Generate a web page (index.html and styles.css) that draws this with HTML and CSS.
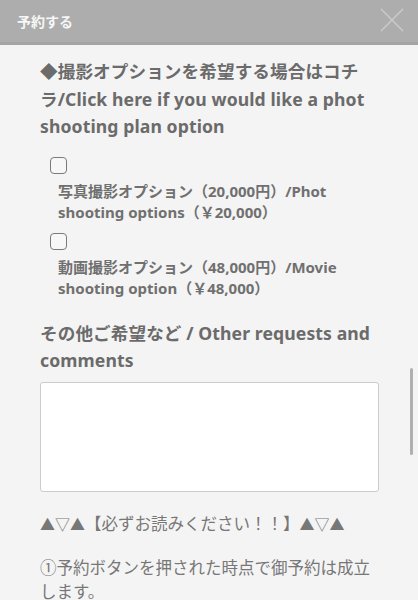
FILE: index.html
```html
<!DOCTYPE html>
<html lang="ja">
<head>
    <meta charset="UTF-8">
    <meta name="viewport" content="width=device-width, initial-scale=1.0">
    <title>予約する</title>
    <link rel="stylesheet" href="styles.css">
</head>
<body>
    <!-- Modal header -->
    <header class="modal-header">
        <span class="modal-title">予約する</span>
        <button class="modal-close" type="button" aria-label="close">
            <svg width="24" height="24" viewBox="0 0 24 24">
                <path d="M1 1 L23 23 M23 1 L1 23" stroke="#c9c9c9" stroke-width="1.6" fill="none"/>
            </svg>
        </button>
    </header>

    <main class="modal-body">
        <h2 class="field-title">◆撮影オプションを希望する場合はコチラ/Click here if you would like a phot shooting plan option</h2>

        <div class="option">
            <input type="checkbox" id="opt1" class="check">
            <label for="opt1" class="option-label">写真撮影オプション（20,000円）/Phot shooting options（￥20,000）</label>
        </div>
        <div class="option">
            <input type="checkbox" id="opt2" class="check">
            <label for="opt2" class="option-label">動画撮影オプション（48,000円）/Movie shooting option（￥48,000）</label>
        </div>

        <h2 class="field-title second">その他ご希望など / Other requests and comments</h2>
        <textarea class="comments"></textarea>

        <p class="notice-title"><span class="tri">▲▽▲</span>【必ずお読みください！！】<span class="tri">▲▽▲</span></p>
        <p class="notice">①予約ボタンを押された時点で御予約は成立します。</p>
    </main>

    <div class="scrollbar"></div>
</body>
</html>
```

FILE: styles.css
```css
/* General */
body {
    margin: 0;
    background: #f4f4f4;
    font-family: "Noto Sans", "Noto Sans CJK JP", sans-serif;
    color: #6b6b6b;
    height: 600px;
    overflow: hidden;
}

/* Header */
.modal-header {
    height: 42px;
    background: #adadad;
    border-bottom: 3px solid #a4a4a4;
    display: flex;
    align-items: center;
    justify-content: space-between;
    padding: 0 14px 0 17px;
}

.modal-title {
    color: #f7f7f7;
    font-size: 14px;
    font-weight: bold;
}

.modal-close {
    background: none;
    border: none;
    padding: 0;
    width: 24px;
    height: 24px;
    margin-top: -2px;
}

/* Body */
.modal-body {
    padding: 13px 39px 0 40px;
}

.field-title {
    margin: 0;
    font-size: 17.6px;
    line-height: 27.5px;
    font-weight: bold;
    letter-spacing: 0.1px;
}

.field-title.second {
    margin-top: 20px;
}

/* Options */
.option {
    display: flex;
    flex-direction: column;
    padding-left: 10px;
}

.option:first-of-type {
    margin-top: 16px;
}

.option + .option {
    margin-top: 9px;
}

.check {
    appearance: none;
    -webkit-appearance: none;
    width: 17px;
    height: 17px;
    margin: 0;
    border: 1.5px solid #7a7a7a;
    border-radius: 4px;
    background: #f7f7f7;
    box-sizing: border-box;
}

.option-label {
    margin-top: 7px;
    padding-left: 8px;
    font-size: 15px;
    line-height: 21.5px;
    font-weight: bold;
    color: #707070;
}

/* Textarea */
.comments {
    display: block;
    width: 100%;
    height: 110px;
    margin-top: 7px;
    box-sizing: border-box;
    border: 1px solid #cccccc;
    border-radius: 3px;
    background: #ffffff;
    resize: none;
}

/* Notices */
.notice-title,
.notice {
    margin: 20px 0 0;
    font-size: 16.5px;
    line-height: 24px;
    color: #777777;
}

.tri {
    font-size: 15px;
}

/* Scroll indicator */
.scrollbar {
    position: absolute;
    left: 410px;
    top: 368px;
    width: 3px;
    height: 87px;
    background: #b0b0b0;
    border-radius: 2px;
}
```
